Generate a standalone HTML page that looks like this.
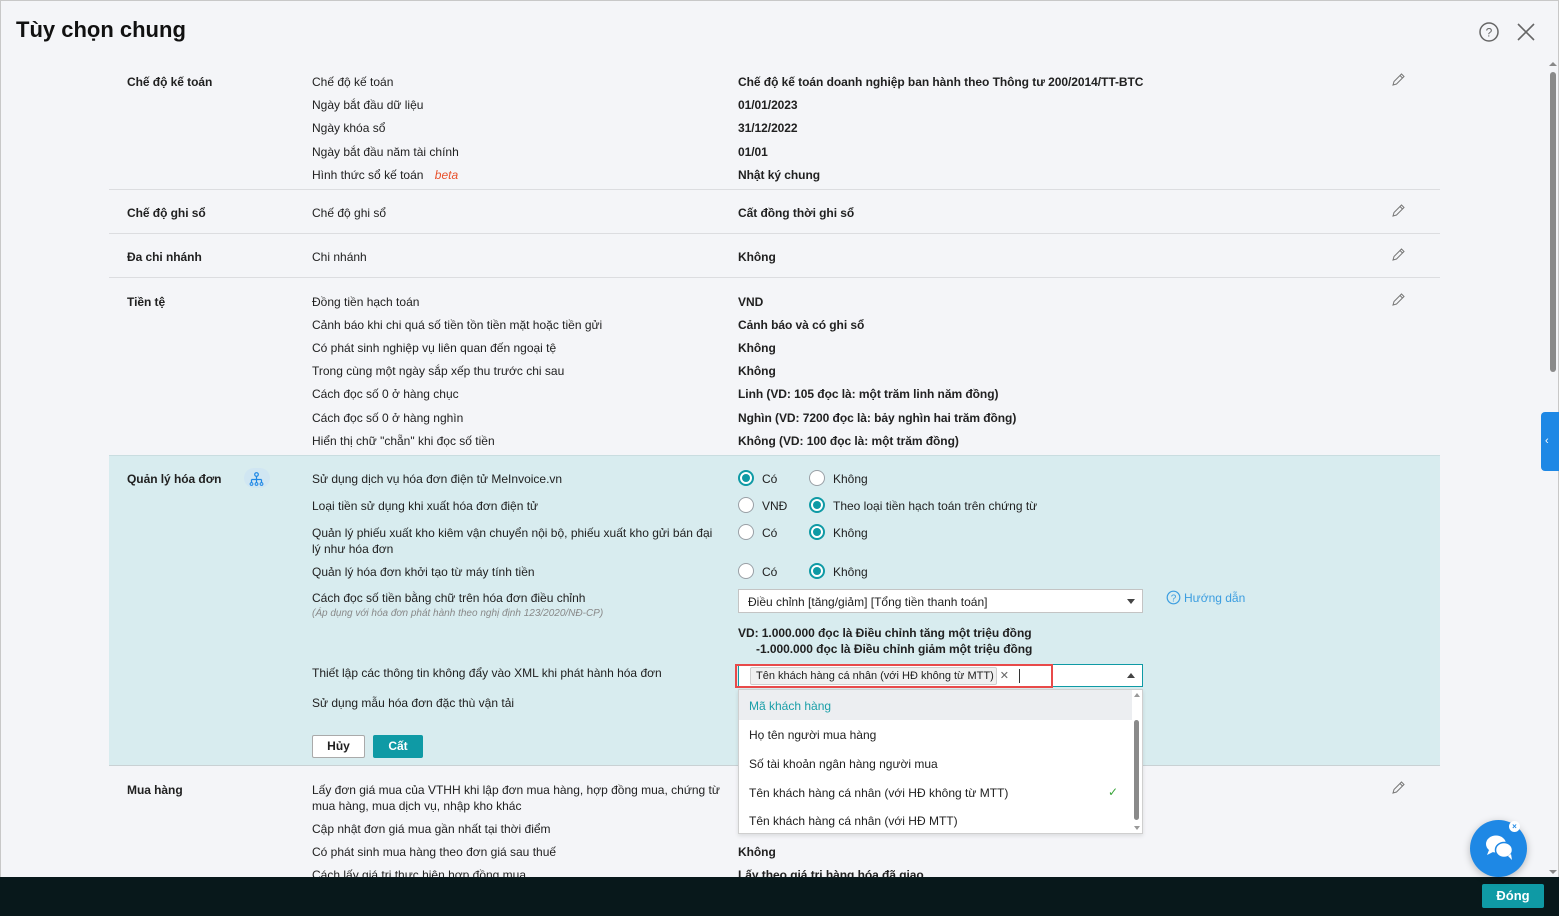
<!DOCTYPE html>
<html><head><meta charset="utf-8"><style>
*{margin:0;padding:0;box-sizing:border-box}
body{width:1559px;height:916px;overflow:hidden;background:#f4f5f8;font-family:"Liberation Sans","DejaVu Sans",sans-serif;font-size:12px;color:#212121;position:relative}
.t{position:absolute;white-space:nowrap;line-height:16px}
.b{font-weight:bold;letter-spacing:-0.05px}
.hr{position:absolute;left:109px;width:1331px;height:1px;background:#dcdde0}
.pen{position:absolute;left:1390px;width:16px;height:16px}
.r{position:absolute;width:16px;height:16px;border-radius:50%;border:1px solid #9aa0a6;background:#fff}
.r.on{border:2px solid #0f9aa5}
.r.on::after{content:"";position:absolute;left:2px;top:2px;width:8px;height:8px;border-radius:50%;background:#0f9aa5}
</style></head><body>
<div style="position:absolute;left:0;top:0;width:1559px;height:916px;border:1px solid #c8c8c8;border-bottom:none"></div>
<div class="t" style="left:16px;top:16px;font-size:22px;line-height:28px;font-weight:bold;color:#111">Tùy chọn chung</div>
<svg style="position:absolute;left:1478px;top:21px" width="22" height="22" viewBox="0 0 22 22"><circle cx="11" cy="11" r="9" fill="none" stroke="#666" stroke-width="1.5"/><text x="11" y="15.5" font-size="12" text-anchor="middle" fill="#666" font-family="Liberation Sans">?</text></svg>
<svg style="position:absolute;left:1516px;top:22px" width="20" height="20"><path d="M2 2L18 18M18 2L2 18" stroke="#666" stroke-width="1.6"/></svg>

<div class="t b" style="left:127px;top:74px">Chế độ kế toán</div>
<div class="t" style="left:312px;top:74px">Chế độ kế toán</div>
<div class="t" style="left:312px;top:97px">Ngày bắt đầu dữ liệu</div>
<div class="t" style="left:312px;top:120px">Ngày khóa sổ</div>
<div class="t" style="left:312px;top:144px">Ngày bắt đầu năm tài chính</div>
<div class="t" style="left:312px;top:167px">Hình thức sổ kế toán <i style="color:#e8522d;margin-left:8px">beta</i></div>
<div class="t b" style="left:738px;top:74px">Chế độ kế toán doanh nghiệp ban hành theo Thông tư 200/2014/TT-BTC</div>
<div class="t b" style="left:738px;top:97px">01/01/2023</div>
<div class="t b" style="left:738px;top:120px">31/12/2022</div>
<div class="t b" style="left:738px;top:144px">01/01</div>
<div class="t b" style="left:738px;top:167px">Nhật ký chung</div>
<svg class="pen" style="top:72px" viewBox="0 0 16 16"><path d="M3 13l1-3.5 7.5-7.5 2.5 2.5-7.5 7.5zM3 13l3.5-1M10 3.5l2.5 2.5" fill="none" stroke="#777" stroke-width="1"/></svg>
<div class="hr" style="top:189px"></div>

<div class="t b" style="left:127px;top:205px">Chế độ ghi sổ</div>
<div class="t" style="left:312px;top:205px">Chế độ ghi sổ</div>
<div class="t b" style="left:738px;top:205px">Cất đồng thời ghi sổ</div>
<svg class="pen" style="top:203px" viewBox="0 0 16 16"><path d="M3 13l1-3.5 7.5-7.5 2.5 2.5-7.5 7.5zM3 13l3.5-1M10 3.5l2.5 2.5" fill="none" stroke="#777" stroke-width="1"/></svg>
<div class="hr" style="top:233px"></div>

<div class="t b" style="left:127px;top:249px">Đa chi nhánh</div>
<div class="t" style="left:312px;top:249px">Chi nhánh</div>
<div class="t b" style="left:738px;top:249px">Không</div>
<svg class="pen" style="top:247px" viewBox="0 0 16 16"><path d="M3 13l1-3.5 7.5-7.5 2.5 2.5-7.5 7.5zM3 13l3.5-1M10 3.5l2.5 2.5" fill="none" stroke="#777" stroke-width="1"/></svg>
<div class="hr" style="top:277px"></div>

<div class="t b" style="left:127px;top:294px">Tiền tệ</div>
<div class="t" style="left:312px;top:294px">Đồng tiền hạch toán</div>
<div class="t" style="left:312px;top:317px">Cảnh báo khi chi quá số tiền tồn tiền mặt hoặc tiền gửi</div>
<div class="t" style="left:312px;top:340px">Có phát sinh nghiệp vụ liên quan đến ngoại tệ</div>
<div class="t" style="left:312px;top:363px">Trong cùng một ngày sắp xếp thu trước chi sau</div>
<div class="t" style="left:312px;top:386px">Cách đọc số 0 ở hàng chục</div>
<div class="t" style="left:312px;top:410px">Cách đọc số 0 ở hàng nghìn</div>
<div class="t" style="left:312px;top:433px">Hiển thị chữ "chẵn" khi đọc số tiền</div>
<div class="t b" style="left:738px;top:294px">VND</div>
<div class="t b" style="left:738px;top:317px">Cảnh báo và có ghi sổ</div>
<div class="t b" style="left:738px;top:340px">Không</div>
<div class="t b" style="left:738px;top:363px">Không</div>
<div class="t b" style="left:738px;top:386px">Linh (VD: 105 đọc là: một trăm linh năm đồng)</div>
<div class="t b" style="left:738px;top:410px">Nghìn (VD: 7200 đọc là: bảy nghìn hai trăm đồng)</div>
<div class="t b" style="left:738px;top:433px">Không (VD: 100 đọc là: một trăm đồng)</div>
<svg class="pen" style="top:292px" viewBox="0 0 16 16"><path d="M3 13l1-3.5 7.5-7.5 2.5 2.5-7.5 7.5zM3 13l3.5-1M10 3.5l2.5 2.5" fill="none" stroke="#777" stroke-width="1"/></svg>

<div style="position:absolute;left:109px;top:455px;width:1331px;height:311px;background:#d8ecef;border-top:1px solid #c9dde0;border-bottom:1px solid #c9d1d4"></div>
<div class="t b" style="left:127px;top:471px">Quản lý hóa đơn</div>
<div style="position:absolute;left:244px;top:468px;width:26px;height:20px;border-radius:10px;background:#d0e6f2"></div>
<svg style="position:absolute;left:249px;top:472px" width="15" height="14" viewBox="0 0 15 14"><circle cx="7.5" cy="2.5" r="1.8" fill="none" stroke="#1e88e5" stroke-width="1.2"/><path d="M7.5 4.3V11M2.5 7.5h10M2.5 7.5V11M12.5 7.5V11" stroke="#1e88e5" stroke-width="1.2" fill="none"/><circle cx="2.5" cy="12" r="1.4" fill="none" stroke="#1e88e5"/><circle cx="7.5" cy="12" r="1.4" fill="none" stroke="#1e88e5"/><circle cx="12.5" cy="12" r="1.4" fill="none" stroke="#1e88e5"/></svg>

<div class="t" style="left:312px;top:471px">Sử dụng dịch vụ hóa đơn điện tử MeInvoice.vn</div>
<div class="t" style="left:312px;top:498px">Loại tiền sử dụng khi xuất hóa đơn điện tử</div>
<div class="t" style="left:312px;top:525px">Quản lý phiếu xuất kho kiêm vận chuyển nội bộ, phiếu xuất kho gửi bán đại</div>
<div class="t" style="left:312px;top:541px">lý như hóa đơn</div>
<div class="t" style="left:312px;top:564px">Quản lý hóa đơn khởi tạo từ máy tính tiền</div>
<div class="t" style="left:312px;top:590px">Cách đọc số tiền bằng chữ trên hóa đơn điều chỉnh</div>
<div class="t" style="left:312px;top:606px;font-size:10px;font-style:italic;color:#888">(Áp dụng với hóa đơn phát hành theo nghị định 123/2020/NĐ-CP)</div>
<div class="t" style="left:312px;top:665px">Thiết lập các thông tin không đẩy vào XML khi phát hành hóa đơn</div>
<div class="t" style="left:312px;top:695px">Sử dụng mẫu hóa đơn đặc thù vận tải</div>

<div class="r on" style="left:738px;top:470px"></div><div class="t" style="left:762px;top:471px">Có</div>
<div class="r" style="left:809px;top:470px"></div><div class="t" style="left:833px;top:471px">Không</div>
<div class="r" style="left:738px;top:497px"></div><div class="t" style="left:762px;top:498px">VNĐ</div>
<div class="r on" style="left:809px;top:497px"></div><div class="t" style="left:833px;top:498px">Theo loại tiền hạch toán trên chứng từ</div>
<div class="r" style="left:738px;top:524px"></div><div class="t" style="left:762px;top:525px">Có</div>
<div class="r on" style="left:809px;top:524px"></div><div class="t" style="left:833px;top:525px">Không</div>
<div class="r" style="left:738px;top:563px"></div><div class="t" style="left:762px;top:564px">Có</div>
<div class="r on" style="left:809px;top:563px"></div><div class="t" style="left:833px;top:564px">Không</div>

<div style="position:absolute;left:738px;top:589px;width:405px;height:24px;background:#fff;border:1px solid #c4c4c4"></div>
<div class="t" style="left:748px;top:594px">Điều chỉnh [tăng/giảm] [Tổng tiền thanh toán]</div>
<div style="position:absolute;left:1127px;top:599px;border-left:4px solid transparent;border-right:4px solid transparent;border-top:5px solid #444"></div>
<svg style="position:absolute;left:1166px;top:590px" width="15" height="15"><circle cx="7.5" cy="7.5" r="6.3" fill="none" stroke="#3b9de0" stroke-width="1.2"/><text x="7.5" y="11.3" font-size="10" text-anchor="middle" fill="#3b9de0" font-family="Liberation Sans">?</text></svg>
<div class="t" style="left:1184px;top:590px;color:#3b9de0">Hướng dẫn</div>
<div class="t b" style="left:738px;top:625px">VD: 1.000.000 đọc là Điều chỉnh tăng một triệu đồng</div>
<div class="t b" style="left:756px;top:641px">-1.000.000 đọc là Điều chỉnh giảm một triệu đồng</div>

<div style="position:absolute;left:738px;top:664px;width:405px;height:23px;background:#fff;border:1px solid #0f9aa5"></div>
<div style="position:absolute;left:735px;top:664px;width:318px;height:24px;border:2px solid #e84a4a"></div>
<div style="position:absolute;left:750px;top:667px;width:247px;height:18px;background:#f0f0f0;border:1px solid #cfcfcf;border-radius:2px"></div>
<div class="t" style="left:756px;top:668px;font-size:11px">Tên khách hàng cá nhân (với HĐ không từ MTT) <span style="color:#666;margin-left:3px">✕</span></div>
<div style="position:absolute;left:1019px;top:669px;width:1px;height:14px;background:#333"></div>
<div style="position:absolute;left:1127px;top:673px;border-left:4px solid transparent;border-right:4px solid transparent;border-bottom:5px solid #444"></div>

<div style="position:absolute;left:738px;top:689px;width:405px;height:145px;background:#fff;border:1px solid #cfcfcf;box-shadow:0 2px 4px rgba(0,0,0,.1)"></div>
<div style="position:absolute;left:739px;top:690px;width:393px;height:30px;background:#eceef1"></div>
<div class="t" style="left:749px;top:698px;color:#1a9fa8">Mã khách hàng</div>
<div class="t" style="left:749px;top:727px">Họ tên người mua hàng</div>
<div class="t" style="left:749px;top:756px">Số tài khoản ngân hàng người mua</div>
<div class="t" style="left:749px;top:785px">Tên khách hàng cá nhân (với HĐ không từ MTT)</div>
<div class="t" style="left:1108px;top:784px;color:#3aa53a">✓</div>
<div class="t" style="left:749px;top:813px">Tên khách hàng cá nhân (với HĐ MTT)</div>
<div style="position:absolute;left:1134px;top:720px;width:5px;height:100px;border-radius:3px;background:#8a8a8a"></div>
<div style="position:absolute;left:1134px;top:693px;border-left:3px solid transparent;border-right:3px solid transparent;border-bottom:4px solid #999"></div>
<div style="position:absolute;left:1134px;top:826px;border-left:3px solid transparent;border-right:3px solid transparent;border-top:4px solid #999"></div>

<div style="position:absolute;left:312px;top:735px;width:53px;height:23px;background:#fff;border:1px solid #aaa;border-radius:2px;text-align:center;line-height:21px;font-weight:bold">Hủy</div>
<div style="position:absolute;left:373px;top:735px;width:50px;height:23px;background:#0f9aa5;border-radius:2px;color:#fff;text-align:center;line-height:23px;font-weight:bold">Cất</div>

<div class="t b" style="left:127px;top:782px">Mua hàng</div>
<div class="t" style="left:312px;top:782px">Lấy đơn giá mua của VTHH khi lập đơn mua hàng, hợp đồng mua, chứng từ</div>
<div class="t" style="left:312px;top:798px">mua hàng, mua dịch vụ, nhập kho khác</div>
<div class="t" style="left:312px;top:821px">Cập nhật đơn giá mua gần nhất tại thời điểm</div>
<div class="t" style="left:312px;top:844px">Có phát sinh mua hàng theo đơn giá sau thuế</div>
<div class="t" style="left:312px;top:867px">Cách lấy giá trị thực hiện hợp đồng mua</div>
<div class="t b" style="left:738px;top:844px">Không</div>
<div class="t b" style="left:738px;top:867px">Lấy theo giá trị hàng hóa đã giao</div>
<svg class="pen" style="top:780px" viewBox="0 0 16 16"><path d="M3 13l1-3.5 7.5-7.5 2.5 2.5-7.5 7.5zM3 13l3.5-1M10 3.5l2.5 2.5" fill="none" stroke="#777" stroke-width="1"/></svg>

<div style="position:absolute;left:1550px;top:72px;width:6px;height:300px;border-radius:3px;background:#8a8a8a"></div>
<div style="position:absolute;left:1549px;top:62px;border-left:4px solid transparent;border-right:4px solid transparent;border-bottom:4px solid #888"></div>
<div style="position:absolute;left:1549px;top:870px;border-left:4px solid transparent;border-right:4px solid transparent;border-top:4px solid #888"></div>
<div style="position:absolute;left:1541px;top:412px;width:18px;height:59px;background:#1e88e5;border-radius:4px 0 0 4px;color:#fff;font-size:11px;line-height:59px;padding-left:4px">‹</div>

<div style="position:absolute;left:0;top:877px;width:1559px;height:39px;background:#08181b"></div>
<div style="position:absolute;left:1482px;top:884px;width:62px;height:24px;background:#0f9aa5;border-radius:2px;color:#fff;font-weight:bold;text-align:center;line-height:24px;font-size:13px">Đóng</div>

<div style="position:absolute;left:1470px;top:820px;width:57px;height:57px;border-radius:50%;background:#1e88e5;box-shadow:0 2px 8px rgba(0,0,0,.25)"></div>
<svg style="position:absolute;left:1484px;top:833px" width="32" height="30" viewBox="0 0 32 30"><ellipse cx="12" cy="11" rx="10" ry="8.5" fill="#fff"/><path d="M5 17l-2 5 6-3z" fill="#fff"/><ellipse cx="20" cy="17" rx="8.5" ry="7.5" fill="#fff" stroke="#1e88e5" stroke-width="1.5"/><path d="M24 23l4 4-1-6z" fill="#fff"/></svg>
<div style="position:absolute;left:1509px;top:821px;width:11px;height:11px;border-radius:50%;background:#fff;color:#1e88e5;font-size:8px;line-height:11px;text-align:center;font-weight:bold">×</div>
</body></html>
